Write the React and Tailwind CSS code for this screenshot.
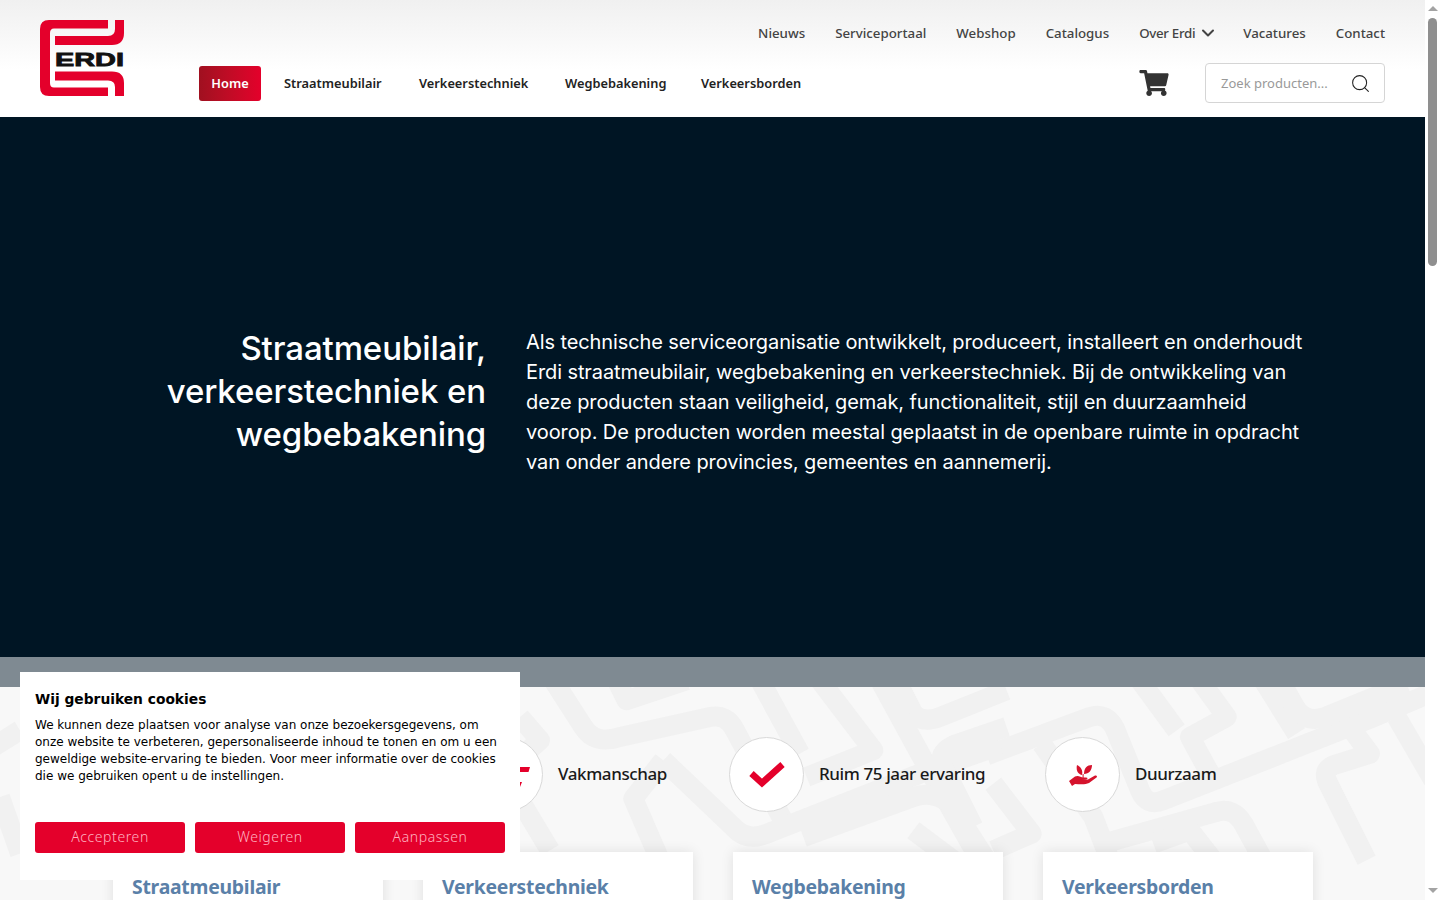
import React from "react";
import { ChevronDown, Search } from "lucide-react";

const exo = "font-['Noto_Sans','Open_Sans',sans-serif]";

function Logo() {
  return (
    <svg width="84" height="76" viewBox="0 0 84 76" className="block">
      <path d="M68 0 H9 Q0 0 0 9 V67 Q0 76 9 76 H68 V67.5 H14 Q10 67.5 10 63 V13 Q10 8.5 14 8.5 H68 Z" fill="#e4002b" />
      <path d="M15 16 H68 Q75 16 75 9 V0 H84 V13 Q84 25 72 25 H15 Z" fill="#e4002b" />
      <path d="M15 51.5 H72 Q84 51.5 84 63 V76 H75 V67 Q75 60.5 68 60.5 H15 Z" fill="#e4002b" />
      <text x="15" y="46" fontFamily="'Liberation Sans',sans-serif" fontWeight="700" fontSize="18" fill="#111" stroke="#111" strokeWidth="0.8" textLength="69" lengthAdjust="spacingAndGlyphs">ERDI</text>
    </svg>
  );
}

function Cart() {
  return (
    <svg width="30" height="26" viewBox="0 0 576 512" fill="#333">
      <path d="M528.12 301.319l47.273-208C578.806 78.301 567.391 64 551.99 64H159.208l-9.166-44.81C147.758 8.021 137.93 0 126.529 0H24C10.745 0 0 10.745 0 24v16c0 13.255 10.745 24 24 24h69.883l70.248 343.435C147.325 417.1 136 435.222 136 456c0 30.928 25.072 56 56 56s56-25.072 56-56c0-15.674-6.447-29.835-16.824-40h209.647C430.447 426.165 424 440.326 424 456c0 30.928 25.072 56 56 56s56-25.072 56-56c0-22.172-12.888-41.332-31.579-50.405l5.517-24.276c3.413-15.018-8.002-29.319-23.403-29.319H218.117l-6.545-32h293.145c11.206 0 20.92-7.754 23.403-18.681z" />
    </svg>
  );
}

function Pattern() {
  return (
    <svg className="absolute left-0 top-0 w-[1425px] h-[213px]" viewBox="0 0 1425 213">
      <g fill="none" stroke="#f1f1f1" strokeWidth="60" strokeLinejoin="round" strokeLinecap="butt">
        <g transform="translate(1000 0) scale(0.3333)">
          <path d="M-40 205 L270 90 Q320 75 345 125 L420 310 Q440 360 490 340 L1110 95 L1300 15" />
          <path d="M420 -20 L530 130" />
          <path d="M600 -20 L680 90 L570 150 L630 260" />
          <path d="M790 -20 L890 140" />
          <path d="M840 -20 L885 60 Q915 110 975 90 L1220 -10" />
          <path d="M1050 120 L1110 200 L1000 235 Q965 250 985 290 L1100 520" />
          <path d="M1190 90 L1300 280" />
          <path d="M125 170 L280 390 L330 520" />
          <path d="M310 470 L650 375 Q700 360 730 410 L790 520" />
          <path d="M-20 290 L95 440 L-20 490" />
          <path d="M460 470 L570 430 L640 520" />
        </g>
        <g transform="translate(520 0) scale(0.3333)">
          <path d="M100 -20 L190 120 Q225 175 300 150 L570 90 Q620 80 645 130 L800 420" />
          <path d="M290 -20 L320 40 L500 -20" />
          <path d="M720 -20 L840 200" />
          <path d="M900 -20 L1060 190 L860 270" />
          <path d="M430 220 L340 335 L420 520" />
          <path d="M430 220 L640 420 Q680 465 740 440 L1200 260 L1440 175" />
          <path d="M1130 -20 L1180 80 Q1210 110 1260 90 L1460 10" />
          <path d="M1080 -20 L1200 200 L1380 520" />
          <path d="M1460 120 L1300 175 Q1250 200 1270 240 L1360 420" />
          <path d="M850 450 L1180 330 Q1240 310 1290 350 L1400 520" />
          <path d="M1180 430 L1300 520" />
          <path d="M0 90 L60 160 L-20 230" />
          <path d="M90 490 L0 340" />
        </g>
        <g transform="translate(0 0) scale(0.3333)">
          <path d="M-20 180 L60 130" />
          <path d="M0 330 L60 500" />
        </g>
      </g>
    </svg>
  );
}

function Feature({ icon, label, className = "" }) {
  return (
    <div className={`flex items-center gap-[15px] ${className}`}>
      <div className="w-[75px] h-[75px] shrink-0 rounded-full bg-white border border-[#d9d9d9] flex items-center justify-center">
        {icon}
      </div>
      <span className={`${exo} -mt-[2px] text-[17px] font-medium text-[#1a1a1a] tracking-[-0.4px]`}>{label}</span>
    </div>
  );
}

const Check = (
  <svg width="36" height="27" viewBox="0 0 36 27">
    <path d="M2.5 12.5 L13 22 L33.5 3.5" fill="none" stroke="#e4002b" strokeWidth="6.5" />
  </svg>
);

const Tool = (
  <svg width="73" height="73" viewBox="0 0 73 73">
    <path d="M40 29 H61 L59.5 34 H40Z M48 44 H53 L51 49 H48Z" fill="#e4002b" />
  </svg>
);

const Plant = (
  <svg width="30" height="24" viewBox="0 0 30 24" fill="#d5122c">
    <path d="M14 12 C9 11 8 6 9 2 C13 4 15 7 14 12Z" />
    <path d="M16 11 C16 5 19 2 24 2 C24 7 21 11 16 11Z" />
    <path d="M14.6 11 h1 v4 h-1z" />
    <path d="M1 18 L7 13.5 C10 12 13 14 15 14.5 L18 14.5 C20 14.5 20 16 18 16.5 L14 17 L20 16.5 L27 12.5 C29 12 29.5 13.5 28.5 14.5 L21 20 C17 22 11 21 7 21 L4 23 Z" />
  </svg>
);

function Card({ title }) {
  return (
    <div className="w-[270px] h-[120px] bg-white shadow-[0_0_12px_rgba(0,0,0,0.1)] pt-[21px] px-[19px]">
      <h3 className={`${exo} text-[19.4px] leading-[28px] font-bold text-[#5a80a8] tracking-[-0.25px]`}>{title}</h3>
    </div>
  );
}

export default function App() {
  const top = ["Nieuws", "Serviceportaal", "Webshop", "Catalogus"];
  const cats = ["Straatmeubilair", "Verkeerstechniek", "Wegbebakening", "Verkeersborden"];
  const main = [
    { t: "Straatmeubilair", w: "w-[135px]" },
    { t: "Verkeerstechniek", w: "w-[146px]" },
    { t: "Wegbebakening", w: "w-[136px]" },
    { t: "Verkeersborden", w: "w-[100px]" },
  ];
  return (
    <div className="flex h-screen overflow-hidden bg-white">
      <main className="w-[1425px] shrink-0 h-full overflow-hidden">
        <header className="h-[117px] bg-gradient-to-b from-[#f0f0f0] to-white to-60% flex px-[40px]">
          <div className="pt-[20px] w-[159px] shrink-0"><Logo /></div>
          <div className="flex-1 flex flex-col">
            <nav className={`${exo} h-[66px] pt-[24px] flex items-start justify-end gap-[30px] text-[13.3px] leading-[18px] font-medium text-[#444]`}>
              {top.map((t) => <a key={t}>{t}</a>)}
              <a className="flex items-center gap-[3px]"><span className="tracking-[-0.3px]">Over Erdi</span><ChevronDown size={20} strokeWidth={2.4} className="-my-[2px] -mr-[5px]" /></a>
              <a>Vacatures</a>
              <a>Contact</a>
            </nav>
            <div className="flex items-start justify-between">
              <nav className={`${exo} flex items-center text-[12.8px] font-semibold text-[#222]`}>
                <a className="h-[35px] w-[62px] rounded-[3px] flex items-center justify-center text-white bg-gradient-to-r from-[#a01020] to-[#e4002b] mr-[23px]">Home</a>
                {main.map((m) => <a key={m.t} className={m.w}>{m.t}</a>)}
              </nav>
              <div className="flex items-center gap-[36px] -mt-[3px]">
                <Cart />
                <div className={`${exo} w-[180px] h-[40px] rounded-[4px] border border-[#d5d5d5] bg-white flex items-center justify-between pl-[15px] pr-[13px] text-[13px] text-[#999]`}>
                  <span className="mt-[1px]">Zoek producten...</span>
                  <Search size={21} strokeWidth={1.2} className="text-[#222]" />
                </div>
              </div>
            </div>
          </div>
        </header>
        <section className="h-[540px] bg-[#001524] flex items-start pt-[210px] pl-[150px] font-['Inter',sans-serif] text-white">
          <h1 className="w-[336px] shrink-0 text-right text-[33px] leading-[43px] font-medium tracking-[-0.1px]">
            Straatmeubilair, verkeerstechniek en wegbebakening
          </h1>
          <p className="ml-[40px] w-[790px] text-[20px] leading-[30px] tracking-[-0.1px]">
            Als technische serviceorganisatie ontwikkelt, produceert, installeert en onderhoudt Erdi straatmeubilair, wegbebakening en verkeerstechniek. Bij de ontwikkeling van deze producten staan veiligheid, gemak, functionaliteit, stijl en duurzaamheid voorop. De producten worden meestal geplaatst in de openbare ruimte in opdracht van onder andere provincies, gemeentes en aannemerij.
          </p>
        </section>
        <div className="h-[30px] bg-[#7f8a92]" />
        <section className="relative h-[213px] bg-[#f8f8f8] overflow-hidden">
          <Pattern />
          <div className="relative">
            <div className="flex pt-[50px] pl-[468px]">
              <Feature icon={Tool} label="Vakmanschap" className="w-[261px]" />
              <Feature icon={Check} label="Ruim 75 jaar ervaring" className="w-[316px]" />
              <Feature icon={Plant} label="Duurzaam" />
            </div>
            <div className="flex gap-[40px] pl-[113px] mt-[40px]">
              {cats.map((t) => <Card key={t} title={t} />)}
            </div>
          </div>
        </section>
      </main>
      <aside className="w-[15px] shrink-0 h-full bg-white flex flex-col items-center pt-[6px] pb-[7px]">
        <div className="w-0 h-0 border-l-[5px] border-r-[5px] border-b-[5px] border-l-transparent border-r-transparent border-b-[#a3a3a3]" />
        <div className="w-[9px] h-[248px] mt-[7px] rounded-[5px] bg-[#8f8f8f]" />
        <div className="flex-1" />
        <div className="w-0 h-0 border-l-[5px] border-r-[5px] border-t-[5px] border-l-transparent border-r-transparent border-t-[#a3a3a3]" />
      </aside>
      <div className="fixed left-[20px] bottom-[20px] w-[500px] h-[208px] bg-white p-[15px] font-['DejaVu_Sans',sans-serif] text-black">
        <h2 className="text-[13.8px] leading-[24px] font-bold">Wij gebruiken cookies</h2>
        <p className="mt-[6px] text-[12px] leading-[17px]">
          We kunnen deze plaatsen voor analyse van onze bezoekersgegevens, om onze website te verbeteren, gepersonaliseerde inhoud te tonen en om u een geweldige website-ervaring te bieden. Voor meer informatie over de cookies die we gebruiken opent u de instellingen.
        </p>
        <div className="absolute left-[15px] right-[15px] top-[150px] flex gap-[10px]">
          {["Accepteren", "Weigeren", "Aanpassen"].map((t) => (
            <button key={t} className={`${exo} flex-1 h-[31px] pb-[2px] rounded-[3px] bg-[#e4002b] text-[14px] font-light tracking-[0.6px] text-[#ffb3c0]`}>{t}</button>
          ))}
        </div>
      </div>
    </div>
  );
}
